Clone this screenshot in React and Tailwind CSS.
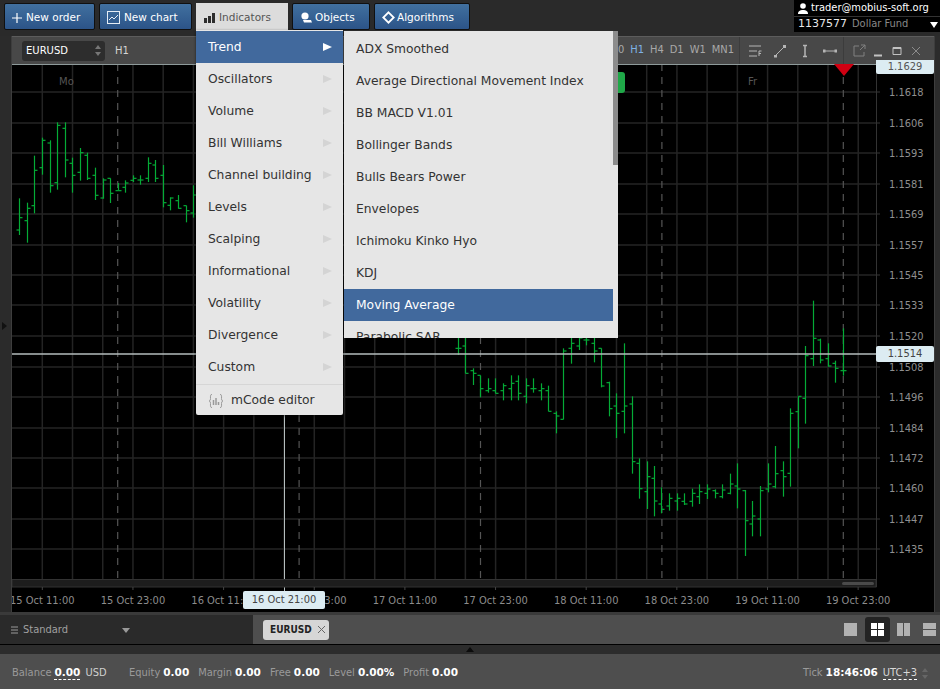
import React from "react";

const FONT = { fontFamily: '"DejaVu Sans", sans-serif' };
const AXIS_FONT = { fontFamily: '"DejaVu Sans Condensed", "DejaVu Sans", sans-serif', fontStretch: "condensed" };

// [x, high, low, open, close] measured in page pixels
const fromZoom = (ox, oy, rows) =>
  rows.map(([x, h, l, o, c]) => [Math.floor(ox + x / 3) + 0.5, oy + h / 3, oy + l / 3, oy + o / 3, oy + c / 3]);

const BARS = [
  ...fromZoom(0, 60, [
    [14, 495, 525, 505, 505],
    [59, 415, 525, 510, 473],
    [81, 428, 548, 482, 445],
    [104, 287, 460, 437, 331],
    [127, 233, 344, 323, 241],
    [150, 241, 398, 249, 377],
    [172, 187, 389, 368, 196],
    [195, 187, 352, 205, 300],
    [218, 293, 398, 310, 346],
    [240, 264, 362, 337, 278],
    [263, 278, 360, 286, 355],
    [286, 323, 420, 346, 406],
    [309, 355, 416, 414, 360],
    [331, 355, 429, 355, 400],
    [354, 369, 392, 392, 392],
    [377, 361, 398, 382, 369],
    [399, 346, 366, 361, 355],
    [422, 346, 374, 360, 360],
    [444, 292, 366, 355, 310],
    [467, 300, 366, 315, 355],
    [490, 315, 442, 346, 428],
    [512, 412, 451, 436, 414],
    [535, 405, 446, 422, 445],
    [558, 437, 487, 437, 452],
    [581, 376, 473, 459, 405],
  ]),
  ...fromZoom(440, 330, [
    [54, 0, 75, 55, 55],
    [77, 0, 130, 48, 130],
    [99, 115, 165, 122, 130],
    [122, 136, 202, 136, 176],
    [145, 145, 188, 182, 176],
    [167, 145, 190, 182, 190],
    [190, 160, 211, 182, 167],
    [213, 136, 211, 176, 160],
    [235, 136, 211, 154, 190],
    [258, 145, 220, 199, 167],
    [281, 145, 188, 176, 176],
    [303, 160, 211, 182, 176],
    [326, 167, 244, 182, 244],
    [349, 244, 310, 250, 258],
    [371, 55, 268, 268, 63],
    [394, 0, 101, 55, 40],
    [417, 0, 60, 48, 24],
    [440, 0, 46, 30, 30],
    [462, 0, 97, 40, 63],
    [485, 55, 172, 55, 168],
    [507, 155, 259, 158, 236],
    [530, 190, 324, 228, 250],
    [553, 40, 310, 244, 228],
    [576, 199, 431, 222, 395],
    [598, 385, 506, 400, 476],
    [621, 394, 537, 485, 440],
    [644, 408, 559, 445, 513],
  ]),
  ...fromZoom(660, 280, [
    [5, 622, 700, 672, 688],
    [28, 640, 692, 678, 655],
    [51, 640, 692, 663, 655],
    [74, 640, 675, 664, 672],
    [97, 626, 680, 664, 640],
    [119, 613, 672, 650, 635],
    [142, 613, 657, 640, 627],
    [165, 628, 655, 632, 640],
    [188, 613, 655, 650, 630],
    [210, 581, 643, 640, 612],
    [233, 550, 685, 618, 627],
    [256, 630, 828, 632, 722],
    [278, 663, 769, 732, 708],
    [301, 618, 769, 717, 632],
    [324, 550, 637, 627, 612],
    [346, 498, 625, 620, 581],
    [369, 544, 650, 572, 590],
    [392, 385, 620, 580, 400],
    [414, 349, 505, 395, 349],
    [437, 198, 431, 355, 227],
    [460, 62, 258, 236, 175],
    [482, 176, 250, 180, 240],
    [505, 190, 260, 236, 258],
    [527, 242, 308, 250, 265],
    [550, 145, 287, 272, 272],
  ]),
];

const PRICES = [
  ["1.1618", 92], ["1.1606", 123], ["1.1593", 153], ["1.1581", 184], ["1.1569", 214],
  ["1.1557", 245], ["1.1545", 275], ["1.1533", 305], ["1.1520", 336], ["1.1508", 367],
  ["1.1496", 397], ["1.1484", 428], ["1.1472", 458], ["1.1460", 488], ["1.1447", 519],
  ["1.1435", 549],
];

const DATES = [
  "15 Oct 11:00", "15 Oct 23:00", "16 Oct 11:00", "16 Oct 23:00", "17 Oct 11:00",
  "17 Oct 23:00", "18 Oct 11:00", "18 Oct 23:00", "19 Oct 11:00", "19 Oct 23:00",
];

const GROUPS = [
  "Trend", "Oscillators", "Volume", "Bill Williams", "Channel building", "Levels",
  "Scalping", "Informational", "Volatility", "Divergence", "Custom",
];

const INDICATORS = [
  "ADX Smoothed", "Average Directional Movement Index", "BB MACD V1.01", "Bollinger Bands",
  "Bulls Bears Power", "Envelopes", "Ichimoku Kinko Hyo", "KDJ", "Moving Average", "Parabolic SAR",
];

function Chart() {
  const vertical = Array.from({ length: 28 }, (_, i) => 42.3 + i * 30.22);
  const separators = [117.7, 299.1, 480.5, 661.9, 843.3];
  return (
    <svg width="922" height="548" viewBox="12 64 922 548" className="block bg-black">
      {vertical.map((x) => (
        <line key={x} x1={x} x2={x} y1="64" y2="580" stroke="#242424" strokeWidth="1.500" />
      ))}
      {PRICES.map(([p, y]) => (
        <g key={p}>
          <line x1="12" x2="880" y1={y} y2={y} stroke="#242424" strokeWidth="1.500" />
          <text x="889" y={y + 4} fontSize="11" fill="#8f8f8f" style={AXIS_FONT}>{p}</text>
        </g>
      ))}
      {separators.map((x) => (
        <line key={x} x1={x} x2={x} y1="64" y2="586" stroke="#555" strokeWidth="1.200" strokeDasharray="7 6" />
      ))}
      <text x="59" y="85" fontSize="10" fill="#555" style={FONT}>Mo</text>
      <text x="748" y="85" fontSize="10" fill="#555" style={FONT}>Fr</text>
      {BARS.map(([x, h, l, o, c], i) => (
        <g key={i} stroke="#04ab36" strokeWidth="1.200">
          <line x1={x} x2={x} y1={h} y2={l} />
          <line x1={x - 3} x2={x} y1={o} y2={o} />
          <line x1={x} x2={x + 3} y1={c} y2={c} />
        </g>
      ))}
      <line x1="12" x2="876" y1="64.5" y2="64.5" stroke="#8e9a9a" />
      <line x1="12" x2="876" y1="354" y2="354" stroke="#b4bdbd" strokeWidth="1.500" />
      <line x1="284.5" x2="284.5" y1="400" y2="592" stroke="#b4bdbd" />
      <rect x="12" y="579.5" width="864" height="7.5" fill="#1d1d1d" stroke="#333" />
      <rect x="842" y="582" width="32" height="3" rx="1.500" fill="#4a4a4a" />
      <line x1="876.5" x2="876.5" y1="64" y2="587" stroke="#333" />
      {DATES.map((d, i) => {
        const x = 42.3 + i * 90.65;
        return (
          <g key={d}>
            <line x1={x} x2={x} y1="587" y2="590" stroke="#444" />
            <text x={x} y="604" textAnchor="middle" fontSize="11" fill="#8c8c8c" style={AXIS_FONT}>{d}</text>
          </g>
        );
      })}
      <polygon points="834,64 854,64 844,76" fill="#d00012" />
    </svg>
  );
}

function NavIcon({ name }) {
  if (name === "plus")
    return (
      <svg width="10" height="10" viewBox="0 0 10 10" stroke="#fff" strokeWidth="1.200">
        <path d="M5 0v10M0 5h10" />
      </svg>
    );
  if (name === "chart")
    return (
      <svg width="13" height="13" viewBox="0 0 13 13" fill="none" stroke="#e6edf5">
        <rect x="0.5" y="0.5" width="12" height="12" />
        <path d="M2 9l3-3 2 2 4-4" />
      </svg>
    );
  if (name === "bars")
    return (
      <svg width="11" height="10" viewBox="0 0 11 10" fill="#2d2d2d">
        <rect x="0" y="5" width="3" height="5" />
        <rect x="4" y="3" width="3" height="7" />
        <rect x="8" y="0" width="3" height="10" />
      </svg>
    );
  if (name === "objects")
    return (
      <svg width="12" height="11" viewBox="0 0 12 11" fill="#fff">
        <circle cx="5" cy="4" r="3.600" />
        <path d="M3 8h8l1 2.500H4z" />
      </svg>
    );
  return (
    <svg width="13" height="13" viewBox="0 0 13 13" fill="none" stroke="#fff" strokeWidth="1.800">
      <path d="M6.500 1.300l5.200 5.200-5.200 5.200-5.200-5.200z" />
    </svg>
  );
}

function NavButton({ icon, label, width, gap = "gap-[4px]" }) {
  return (
    <button className={`${width} ${gap} h-[27px] flex items-center pl-[7px] pt-[2px] rounded-[2px] border border-[#101010] bg-gradient-to-b from-[#41709f] to-[#2c5488] text-[10.500px] text-white`}>
      <NavIcon name={icon} />
      {label}
    </button>
  );
}

function ToolIcon({ children }) {
  return (
    <svg width="14" height="14" viewBox="0 0 14 14" fill="none" stroke="#b5b5b5">
      {children}
    </svg>
  );
}

function Toolbar() {
  return (
    <div className="h-[28px] flex items-center bg-[#484848] border-t border-[#5c5c5c]">
      <div className="ml-[10px] w-[83px] h-[20px] flex items-center justify-between px-1 rounded-[3px] bg-[#2d2d2d] text-[10px] text-white">
        EURUSD
        <svg width="6" height="11" viewBox="0 0 6 11" fill="#777">
          <path d="M3 0l3 4H0zM3 11L0 7h6z" />
        </svg>
      </div>
      <span className="ml-[10px] text-[10px] text-[#d5d5d5]">H1</span>
      <div className="ml-auto flex items-center gap-[6px] text-[11px] text-[#a8a8a8]" style={AXIS_FONT}>
        <span>M30</span>
        <span className="text-[#7fb2e6]">H1</span>
        <span>H4</span>
        <span>D1</span>
        <span>W1</span>
        <span>MN1</span>
      </div>
      <div className="ml-[5px] h-full w-[104px] flex items-center gap-[11px] pl-[8px] border-l border-[#3c3c3c]">
        <ToolIcon>
          <path d="M1 2h12M1 7h8M1 12h8" />
          <path d="M11 12V7h2.500M11 9.500h2" />
        </ToolIcon>
        <ToolIcon>
          <path d="M2.500 11.500l9-9" />
          <path d="M1 11h3v2.500H1zM10 1h3v3h-3z" fill="#b5b5b5" stroke="none" />
        </ToolIcon>
        <ToolIcon>
          <path d="M7 2v10M5 1.500h4M5 12.500h4" strokeWidth="1.500" />
        </ToolIcon>
        <ToolIcon>
          <path d="M2 7h10" />
          <path d="M0 5.500h2.500v3H0zM11.500 5.500H14v3h-2.500z" fill="#b5b5b5" stroke="none" />
        </ToolIcon>
      </div>
      <div className="h-full w-[91px] flex items-center gap-[5px] pl-[8px] border-l border-[#3c3c3c]">
        <ToolIcon>
          <path d="M7 2H2v10h10V8M8 6l5-5M9 1h4v4" stroke="#808080" />
        </ToolIcon>
        <ToolIcon>
          <path d="M3 11.500h8" strokeWidth="2" stroke="#c2c2c2" />
        </ToolIcon>
        <ToolIcon>
          <path d="M3 3.500h8v7H3zM3 4.500h8" stroke="#c2c2c2" />
        </ToolIcon>
        <ToolIcon>
          <path d="M3 3l8 8M11 3l-8 8" stroke="#8c8c8c" />
        </ToolIcon>
      </div>
    </div>
  );
}

function Caret({ color = "#d0d0d0" }) {
  return (
    <svg width="9" height="8" viewBox="0 0 9 8" fill={color}>
      <path d="M0 0l9 4-9 4z" />
    </svg>
  );
}

function Menus() {
  return (
    <>
      <div className="absolute left-[196px] top-[30px] w-[147px] h-[385px] pt-[1px] bg-[#e6e6e6] rounded-b-[2px] text-[12.300px] text-[#333] shadow-[0_1px_3px_rgba(0,0,0,0.6)]">
        {GROUPS.map((g, i) => (
          <div
            key={g}
            className={`h-[32px] flex items-center justify-between pl-3 pr-[11px] ${i === 0 ? "bg-[#41699d] text-white" : ""}`}
          >
            {g}
            <Caret color={i === 0 ? "#ffffff" : "#d4d4d4"} />
          </div>
        ))}
        <div className="h-[32px] mt-[1px] flex items-center gap-[7px] pl-3 border-t border-[#d6d6d6]">
          <svg width="16" height="16" viewBox="0 0 16 16" fill="none" stroke="#999">
            <path d="M4 1.500C2 1.500 2.500 3 2.500 5.500S1 8 1 8s1.500 0 1.500 2.500-.5 4 1.500 4M12 1.500c2 0 1.500 1.500 1.500 4S15 8 15 8s-1.500 0-1.500 2.500.5 4-1.500 4" />
            <path d="M5.500 7v5M8 5v7M10.500 9v3" strokeWidth="1.500" />
          </svg>
          mCode editor
        </div>
      </div>
      <div className="absolute left-[344px] top-[31px] w-[274px] h-[307px] pt-[2px] overflow-hidden bg-[#e6e6e6] text-[12.300px] text-[#333]">
        {INDICATORS.map((name) => (
          <div
            key={name}
            className={`h-[32px] mr-[5px] flex items-center pl-3 ${name === "Moving Average" ? "bg-[#41699d] text-white" : ""}`}
          >
            {name}
          </div>
        ))}
        <div className="absolute right-0 top-0 w-[5px] h-[134px] bg-[#8c8c8c]" />
      </div>
    </>
  );
}

function Stat({ label, value }) {
  return (
    <span className="flex items-baseline gap-[3px]">
      <span className="text-[#9a9a9a]" style={AXIS_FONT}>{label}</span>
      <b className="text-white text-[10.500px]">{value}</b>
    </span>
  );
}

export default function App() {
  return (
    <div className="relative w-[940px] h-[689px] overflow-hidden flex flex-col bg-[#2a2a2a]" style={FONT}>
      <div className="h-[36px] flex items-start">
        <div className="flex gap-[4px] pl-[4px] pt-[3px]">
          <NavButton icon="plus" label="New order" width="w-[91px]" />
          <NavButton icon="chart" label="New chart" width="w-[93px]" />
          <div className="w-[92px] h-[28px] flex items-center gap-[4px] pl-[8px] pt-[2px] bg-[#dcdcdc] text-[10.500px] text-[#555]">
            <NavIcon name="bars" />
            Indicators
          </div>
          <NavButton icon="objects" label="Objects" width="w-[78px]" gap="gap-[3px]" />
          <NavButton icon="algo" label="Algorithms" width="w-[96px]" gap="gap-[2px]" />
        </div>
        <div className="ml-auto w-[146px] h-[32px] bg-black text-[11px] whitespace-nowrap">
          <div className="h-[16px] flex items-center gap-[3px] pl-[4px] text-white" style={AXIS_FONT}>
            <svg width="10" height="11" viewBox="0 0 10 11" fill="#fff">
              <circle cx="5" cy="3" r="2.800" />
              <path d="M0 11c0-3 2-4 5-4s5 1 5 4z" />
            </svg>
            trader@mobius-soft.org
          </div>
          <div className="h-[16px] flex items-center gap-[5px] pl-[4px] pr-[2px] border-t border-[#333] text-[#e8e8e8]">
            1137577
            <span className="text-[#888]" style={AXIS_FONT}>Dollar Fund</span>
            <svg width="8" height="6" viewBox="0 0 8 6" fill="#fff" className="ml-auto">
              <path d="M0 0h8L4 6z" />
            </svg>
          </div>
        </div>
      </div>

      <div className="flex flex-1">
        <div className="w-[12px] bg-[#2b2b2b] border-r border-[#3d3d3d] flex items-center">
          <svg width="5" height="8" viewBox="0 0 5 8" fill="#111" className="ml-[2px] mt-[4px]">
            <path d="M0 0l5 4-5 4z" />
          </svg>
        </div>
        <div className="w-[922px] flex flex-col">
          <Toolbar />
          <Chart />
        </div>
        <div className="w-[6px] bg-[#2b2b2b] border-l border-[#3d3d3d]" />
      </div>

      <div className="h-[3px] bg-[#3a3a3a]" />
      <div className="h-[30px] flex border-b border-black text-[11px]">
        <div className="w-[253px] flex items-center bg-[#2a2a2a] pl-[11px] pt-[1px] text-[#a0a0a0]">
          <svg width="7" height="8" viewBox="0 0 7 8" stroke="#999">
            <path d="M0 1h7M0 4h7M0 7h7" />
          </svg>
          <span className="ml-[5px]" style={AXIS_FONT}>Standard</span>
          <svg width="8" height="5" viewBox="0 0 8 5" fill="#999" className="ml-[54px]">
            <path d="M0 0h8L4 5z" />
          </svg>
        </div>
        <div className="flex-1 flex items-center bg-[#4e4e4e] pl-[10px] pr-[4px]">
          <div className="w-[66px] h-[20px] flex items-center justify-between pl-[7px] pr-[3px] rounded-[3px] bg-[#d6d6d6] text-[10px] font-bold text-[#222]" style={AXIS_FONT}>
            EURUSD
            <svg width="9" height="9" viewBox="0 0 9 9" stroke="#666">
              <path d="M1 1l7 7M8 1L1 8" />
            </svg>
          </div>
          <div className="ml-auto flex items-center">
            <div className="w-[13px] h-[13px] bg-[#b2b2b2]" />
            <div className="ml-[8px] w-[25px] h-[25px] rounded-[3px] bg-[#232323] flex items-center justify-center">
              <div className="grid grid-cols-2 gap-[1px]">
                <div className="w-[6px] h-[6px] bg-white" />
                <div className="w-[6px] h-[6px] bg-white" />
                <div className="w-[6px] h-[6px] bg-white" />
                <div className="w-[6px] h-[6px] bg-white" />
              </div>
            </div>
            <div className="ml-[7px] flex gap-[1px]">
              <div className="w-[6px] h-[13px] bg-[#b2b2b2]" />
              <div className="w-[6px] h-[13px] bg-[#b2b2b2]" />
            </div>
            <div className="ml-[13px] flex flex-col gap-[1px]">
              <div className="w-[13px] h-[6px] bg-[#b2b2b2]" />
              <div className="w-[13px] h-[6px] bg-[#b2b2b2]" />
            </div>
          </div>
        </div>
      </div>

      <div className="h-[9px] bg-[#2c2c2c] flex items-end justify-center">
        <svg width="8" height="5" viewBox="0 0 8 5" fill="#0c0c0c" className="mb-[2px]">
          <path d="M4 0l4 5H0z" />
        </svg>
      </div>

      <div className="h-[35px] flex items-center bg-[#4e4e4e] pl-[12px] pr-[12px] pt-[3px] text-[11px]">
        <span className="w-[108px] flex items-baseline gap-[3px]">
          <span className="text-[#9a9a9a]" style={AXIS_FONT}>Balance</span>
          <b className="text-white text-[10.500px] border-b border-dashed border-white leading-[13px]">0.00</b>
          <span className="ml-[2px] text-[#d0d0d0]" style={AXIS_FONT}>USD</span>
        </span>
        <div className="ml-[9px] flex gap-[9px]">
          <Stat label="Equity" value="0.00" />
          <Stat label="Margin" value="0.00" />
          <Stat label="Free" value="0.00" />
          <Stat label="Level" value="0.00%" />
          <Stat label="Profit" value="0.00" />
        </div>
        <div className="ml-auto flex items-baseline gap-[3px]">
          <Stat label="Tick" value="18:46:06" />
          <span className="ml-[2px] text-[#d8d8d8] border-b border-dashed border-white leading-[13px]" style={AXIS_FONT}>UTC+3</span>
          <svg width="6" height="11" viewBox="0 0 6 11" fill="#666" className="ml-[2px] self-center">
            <path d="M3 0l3 4H0zM3 11L0 7h6z" />
          </svg>
        </div>
      </div>

      <Menus />

      {/* labels sitting on top of the chart */}
      <div className="absolute left-[618px] top-[72px] w-[7px] h-[21px] rounded-r-[3px] bg-[#1fa848]" />
      <div className="absolute left-[876px] top-[60px] w-[58px] h-[14px] flex items-center justify-center rounded-b-[2px] bg-[#dcecf2] text-[11px] text-[#555]" style={AXIS_FONT}>
        1.1629
      </div>
      <div className="absolute left-[876px] top-[346px] w-[58px] h-[16px] flex items-center justify-center rounded-[2px] bg-[#dcecf2] text-[11px] text-[#444]" style={AXIS_FONT}>
        1.1514
      </div>
      <div className="absolute left-[243px] top-[591px] w-[82px] h-[18px] flex items-center justify-center rounded-[2px] bg-[#dcecf2] text-[11px] text-[#444]" style={AXIS_FONT}>
        16 Oct 21:00
      </div>
    </div>
  );
}
